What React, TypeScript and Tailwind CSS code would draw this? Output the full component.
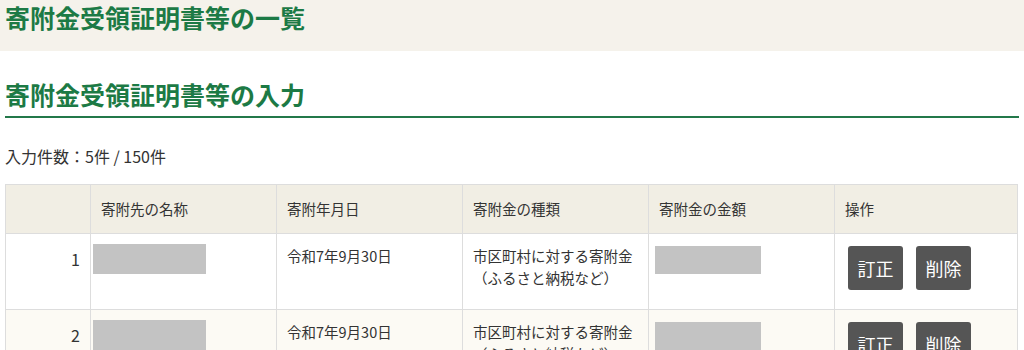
const font = { fontFamily: '"Noto Sans CJK JP", "Noto Sans", sans-serif' };

type Row = { no: number; date: string; kind: string[] };

const rows: Row[] = [
  { no: 1, date: '令和7年9月30日', kind: ['市区町村に対する寄附金', '（ふるさと納税など）'] },
  { no: 2, date: '令和7年9月30日', kind: ['市区町村に対する寄附金', '（ふるさと納税など）'] },
];

const headers = ['', '寄附先の名称', '寄附年月日', '寄附金の種類', '寄附金の金額', '操作'];

function Btn({ label }: { label: string }) {
  return (
    <button className="h-[44px] w-[55px] rounded-[3px] bg-[#555555] text-[18px] text-white">
      {label}
    </button>
  );
}

export default function App() {
  return (
    <div className="min-h-[350px] bg-white text-[#333333]" style={font}>
      <div className="h-[51px] bg-[#f5f2eb] px-[5px] pt-[1px]">
        <h1 className="text-[25px] font-bold leading-[32px] text-[#1c7a45]">寄附金受領証明書等の一覧</h1>
      </div>
      <div className="px-[5px]">
        <h2 className="mt-[27px] border-b-2 border-[#23784a] pb-[6px] text-[25px] font-bold leading-[32px] text-[#1c7a45]">
          寄附金受領証明書等の入力
        </h2>
        <p className="mt-[26px] text-[16px] leading-[24px]">入力件数：5件 / 150件</p>
        <table className="mt-[16px] w-[1013px] table-fixed border-collapse text-[14.5px]">
          <colgroup>
            <col className="w-[85px]" />
            <col className="w-[186px]" />
            <col className="w-[186px]" />
            <col className="w-[186px]" />
            <col className="w-[186px]" />
            <col />
          </colgroup>
          <thead>
            <tr className="h-[49px] bg-[#f1eee4]">
              {headers.map((h, i) => (
                <th
                  key={i}
                  className="border border-[#dddddd] px-[10px] text-left align-middle font-normal"
                >
                  {h}
                </th>
              ))}
            </tr>
          </thead>
          <tbody>
            {rows.map((r, i) => (
              <tr key={r.no} className={`h-[76px] ${i % 2 ? 'bg-[#fcfaf4]' : 'bg-white'}`}>
                <td className="border border-[#dddddd] px-[10px] pt-[13px] text-right align-top text-[16px]">
                  {r.no}
                </td>
                <td className="border border-[#dddddd] pl-[2px] pt-[10px] align-top">
                  <div className="h-[30px] w-[113px] bg-[#c3c3c3]" />
                </td>
                <td className="border border-[#dddddd] px-[10px] pt-[11px] align-top leading-[22px]">
                  {r.date}
                </td>
                <td className="border border-[#dddddd] px-[10px] pt-[11px] align-top leading-[22px]">
                  {r.kind[0]}
                  <br />
                  {r.kind[1]}
                </td>
                <td className="border border-[#dddddd] pl-[6px] pt-[12px] align-top">
                  <div className="h-[28px] w-[106px] bg-[#c3c3c3]" />
                </td>
                <td className="border border-[#dddddd] pl-[13px] pt-[12px] align-top">
                  <div className="flex gap-[13px]">
                    <Btn label="訂正" />
                    <Btn label="削除" />
                  </div>
                </td>
              </tr>
            ))}
          </tbody>
        </table>
      </div>
    </div>
  );
}
